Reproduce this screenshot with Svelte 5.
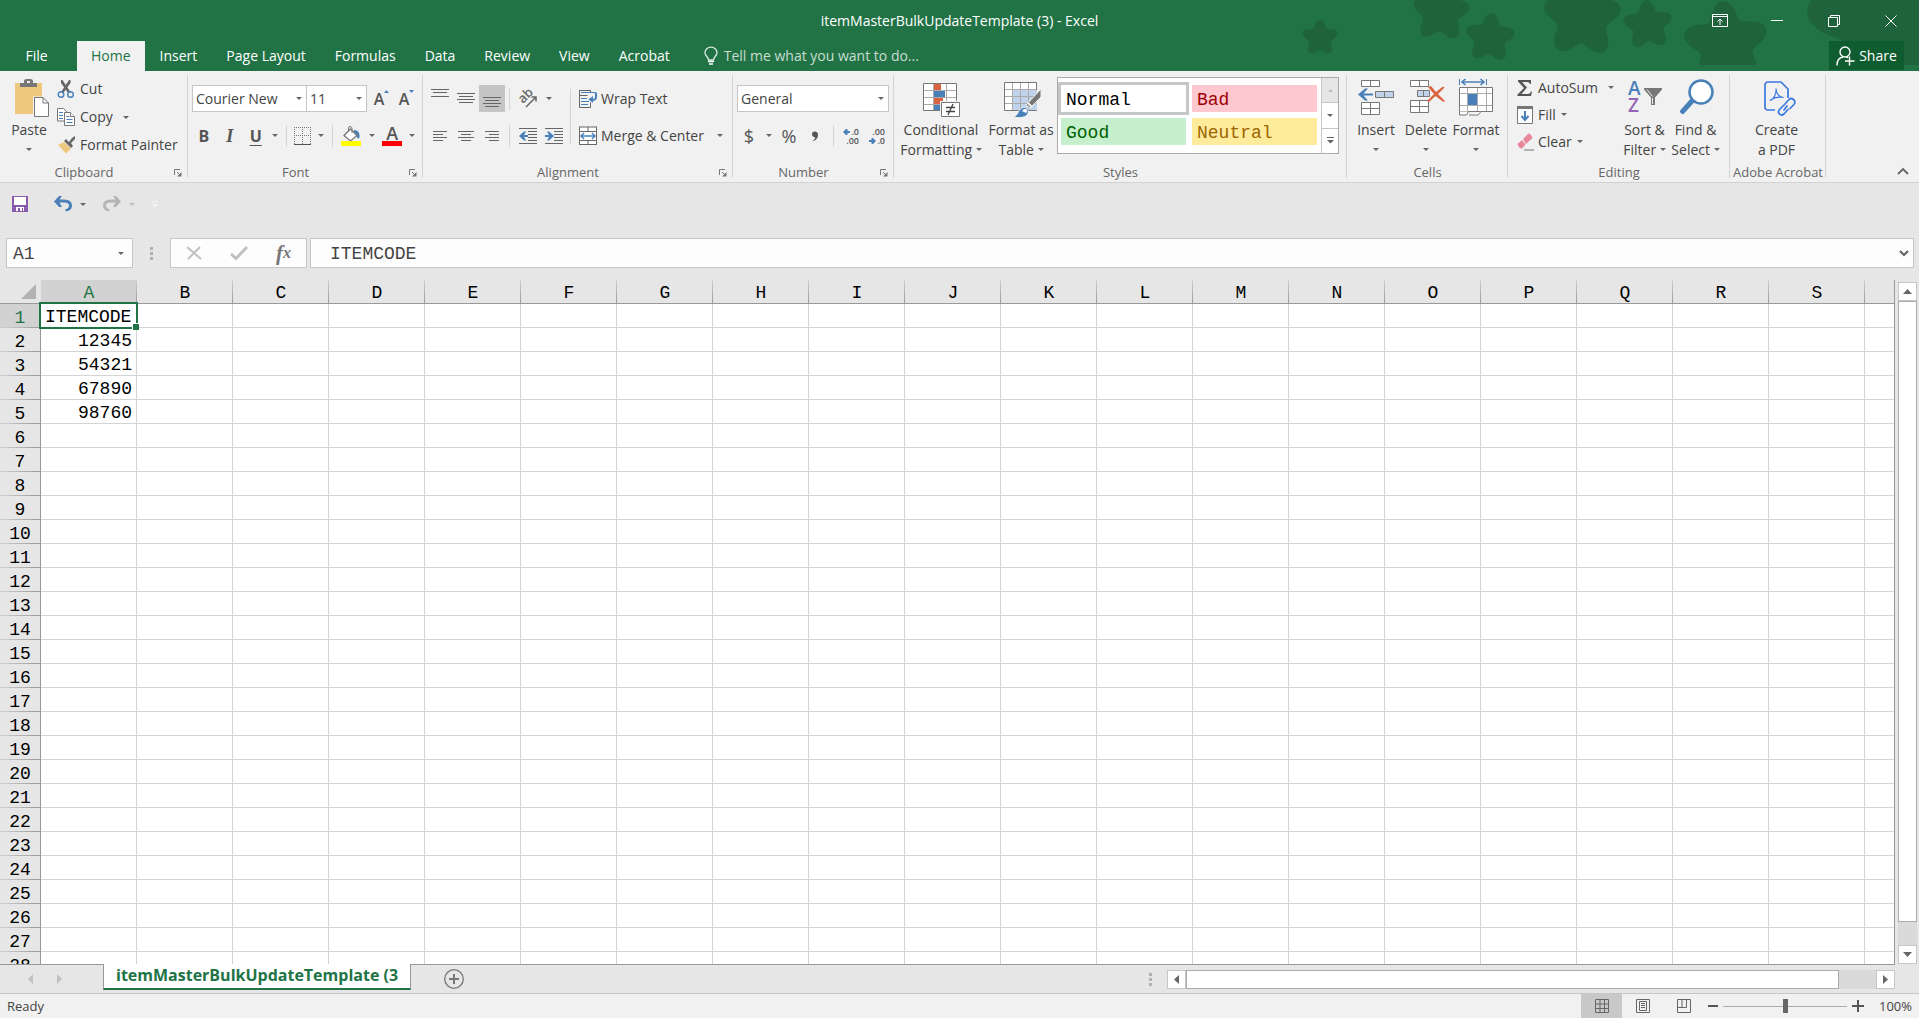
<script lang="ts">
  const tabs = ['Insert', 'Page Layout', 'Formulas', 'Data', 'Review', 'View', 'Acrobat'];
  const columns = 'ABCDEFGHIJKLMNOPQRS'.split('');
  const rows = Array.from({ length: 28 }, (_, i) => i + 1);
  const values: Record<number, string> = { 1: 'ITEMCODE', 2: '12345', 3: '54321', 4: '67890', 5: '98760' };

  let nameBox = $state('A1');
  let formula = $state('ITEMCODE');
  let font = $state('Courier New');
  let fontSize = $state('11');
  let numberFormat = $state('General');
  let zoom = $state(50);

  // Title bar decoration: x, y, radius, rotation in degrees
  const stars = [
    [41, 38, 18, 0],
    [162, 13, 29, 4],
    [211, 38, 25, 4],
    [303, 18, 40, 2],
    [369, 25, 25, -4],
    [447, 44, 43, -4],
    [616, 12, 88, -18]
  ];

  // Soft five-armed star: a circle whose radius swells five times per turn
  function starPath([cx, cy, r, turn]: number[]) {
    const pts = Array.from({ length: 90 }, (_, i) => {
      const t = (i * 4 * Math.PI) / 180;
      const a = t + ((turn - 90) * Math.PI) / 180;
      const d = r * (0.82 + 0.18 * Math.cos(5 * t));
      return `${(cx + Math.cos(a) * d).toFixed(1)} ${(cy + Math.sin(a) * d).toFixed(1)}`;
    });
    return `M${pts.join('L')}z`;
  }
</script>

{#snippet caret()}
  <svg class="caret" width="6" height="3" viewBox="0 0 6 3"><path d="M0 0h6L3 3z" fill="currentColor" /></svg>
{/snippet}

{#snippet launcher(label: string)}
  <button class="launcher" aria-label={label}>
    <svg width="8" height="8" viewBox="0 0 8 8"><path d="M.5 6V.5H6M3 3l3 3" fill="none" stroke="#777" /><path d="M7.500 3v4.500H3z" fill="#777" /></svg>
  </button>
{/snippet}

{#snippet lines(list: number[][])}
  <svg width="18" height="20" viewBox="0 0 18 20" stroke="#666" shape-rendering="crispEdges">
    {#each list as [x1, x2, y]}
      <path d="M{x1} {y + 0.5}H{x2}" />
    {/each}
  </svg>
{/snippet}

<div class="app">
  <header class="top">
    <svg class="stars" width="640" height="65" viewBox="0 0 640 65">
      {#each stars as star}
        <path d={starPath(star)} />
      {/each}
    </svg>
    <div class="title-bar">
      <span></span>
      <h1>itemMasterBulkUpdateTemplate (3) - Excel</h1>
      <div class="window-buttons">
        <button aria-label="Ribbon display options">
          <svg width="16" height="14" viewBox="0 0 16 14" fill="none" stroke="#fff"><path d="M.5 .5h15v12H.5zM.5 2.500h15M8 11V5M5.500 7.500L8 5l2.500 2.500" /></svg>
        </button>
        <button aria-label="Minimize">
          <svg width="12" height="12" viewBox="0 0 12 12" stroke="#fff"><path d="M0 5.500h12" /></svg>
        </button>
        <button aria-label="Restore">
          <svg width="12" height="12" viewBox="0 0 12 12" fill="none" stroke="#fff"><path d="M.5 2.500h9v9h-9zM2.500 2.500v-2h9v9h-2" /></svg>
        </button>
        <button aria-label="Close">
          <svg width="12" height="12" viewBox="0 0 12 12" fill="none" stroke="#fff"><path d="M.5 .5l11 11M11.500 .5l-11 11" /></svg>
        </button>
      </div>
    </div>
    <nav class="tabs">
      <button class="file">File</button>
      <button class="active">Home</button>
      {#each tabs as tab}
        <button>{tab}</button>
      {/each}
      <button class="tell">
        <svg width="14" height="18" viewBox="0 0 14 18" fill="none" stroke="#dcebe2"><path d="M4.500 13c0-3-3.500-4-3.500-7.300a6 5.500 0 0 1 12 0C13 9 9.500 10 9.500 13z" stroke-width="1.300" /><path d="M4 14.500h6M5 17h4" stroke-width="1.500" stroke="#fff" /></svg>
        Tell me what you want to do...
      </button>
      <button class="share">
        <svg width="19" height="20" viewBox="0 0 19 20" fill="none" stroke="#fff" stroke-width="1.400"><circle cx="9" cy="6" r="5" /><path d="M1 19.500c0-5 2.500-8 6-8.500M10.500 11l1.500 1M13.500 10.500v9M9 15h9.500" /></svg>
        Share
      </button>
    </nav>
  </header>

  <section class="ribbon">
    <div class="group clipboard">
      <div class="body">
        <button class="big">
          <span class="pic">
            <svg width="36" height="40" viewBox="0 0 36 40">
              <path d="M1 3h27v31H1z" fill="#edc87e" />
              <path d="M6 3h4V1q0-2 3-2h3q3 0 3 2v2h4v4H6z" fill="#777" />
              <path d="M13 1h3v2h-3z" fill="#f1f1f1" />
              <path d="M19 16.500h10.500l6 6V38H19z" fill="#f1f1f1" />
              <path d="M20.500 17.500h8.500l5.500 5.500v13.500h-14z" fill="#fff" stroke="#777" />
              <path d="M29 17.500V23h5.500" fill="none" stroke="#777" />
            </svg>
          </span>
          <span>Paste</span>
          <span class="drop">{@render caret()}</span>
        </button>
        <div class="stack">
          <button>
            <svg width="18" height="20" viewBox="0 0 18 20"><path d="M4 1l1.500 0 8 12-2 1.500L4 4zM13.500 1l0 3-7.500 10.500L4 13l8-12z" fill="#666" /><circle cx="4" cy="15.500" r="2.800" fill="none" stroke="#4a80ba" stroke-width="1.400" /><circle cx="13.500" cy="15.500" r="2.800" fill="none" stroke="#4a80ba" stroke-width="1.400" /></svg>
            Cut
          </button>
          <button>
            <svg width="18" height="20" viewBox="0 0 18 20" fill="#fff" stroke="#777"><path d="M.5 1.500h6l4 4v8.500h-10z" /><path d="M2 5.500h4M2 8.500h4M2 11.500h4" stroke="#4a80ba" /><path d="M7.500 5.500h6l4 4v9h-10z" /><path d="M13.500 5.500v4h4" /><path d="M9.500 9.500h3M9.500 12.500h6M9.500 15.500h6" stroke="#4a80ba" /></svg>
            Copy <span class="far">{@render caret()}</span>
          </button>
          <button>
            <svg width="18" height="20" viewBox="0 0 18 20"><path d="M1 10l6-3 7 7-5 4.500z" fill="#edc87e" /><path d="M7 6l2-2 3 3 3-4 3-2v3l-4 4 2 3-2 2z" fill="#666" /></svg>
            Format Painter
          </button>
        </div>
      </div>
      <footer>Clipboard {@render launcher('Clipboard settings')}</footer>
    </div>

    <div class="group font">
      <div class="body two-rows">
        <div class="row">
          <label class="pick family"><select aria-label="Font" bind:value={font}><option>Courier New</option></select>{@render caret()}</label>
          <label class="pick size"><select aria-label="Font size" bind:value={fontSize}><option>11</option></select>{@render caret()}</label>
          <button class="tool grow" aria-label="Increase font size">A<svg width="5" height="3" viewBox="0 0 5 3"><path d="M0 3h5L2.500 0z" fill="#4a80ba" /></svg></button>
          <button class="tool grow" aria-label="Decrease font size">A<svg width="5" height="3" viewBox="0 0 5 3"><path d="M0 0h5L2.500 3z" fill="#4a80ba" /></svg></button>
        </div>
        <div class="row">
          <button class="tool"><b>B</b></button>
          <button class="tool wide"><i>I</i></button>
          <button class="tool"><u>U</u></button>
          <button class="arrow" aria-label="Underline styles">{@render caret()}</button>
          <hr />
          <button class="tool" aria-label="Borders">
            <svg width="17" height="18" viewBox="0 0 17 18" stroke="#777" fill="none" shape-rendering="crispEdges"><path d="M0 .5h17M.5 0v17M16.500 0v17M8.500 0v17M0 8.500h17" stroke-dasharray="1 1" /><path d="M0 17h17" stroke="#555" /></svg>
          </button>
          <button class="arrow" aria-label="Border styles">{@render caret()}</button>
          <hr />
          <button class="tool wide" aria-label="Fill colour">
            <svg width="20" height="20" viewBox="0 0 20 20"><path d="M13 4c4 0 6 3 5.500 7-.5 2-2 2-2.500 0L13 7z" fill="#4a80ba" /><path d="M9.500 3l6.500 6.500L9.500 15 3 9.500z" fill="#fff" stroke="#777" stroke-width="1.300" /><path d="M7.500 6V2q0-1.500 1.500-1.500t2 1.500v5" fill="none" stroke="#777" /><path d="M0 15h20v5H0z" fill="#ff0" /></svg>
          </button>
          <button class="arrow" aria-label="Fill colours">{@render caret()}</button>
          <button class="tool wide font-color" aria-label="Font colour">A</button>
          <button class="arrow" aria-label="Font colours">{@render caret()}</button>
        </div>
      </div>
      <footer>Font {@render launcher('Font settings')}</footer>
    </div>

    <div class="group alignment">
      <div class="body">
        <div class="two-rows">
          <div class="row">
            <button class="tool mid" aria-label="Top align">{@render lines([[0, 18, 0], [2, 16, 3], [0, 18, 7]])}</button>
            <button class="tool mid" aria-label="Middle align">{@render lines([[0, 18, 4], [2, 16, 7], [0, 18, 10], [2, 16, 13]])}</button>
            <button class="tool mid pressed" aria-label="Bottom align">{@render lines([[0, 18, 8], [2, 16, 11], [0, 18, 14], [2, 16, 17]])}</button>
            <hr />
            <button class="tool wide" aria-label="Orientation">
              <svg width="20" height="20" viewBox="0 0 20 20"><text x="0" y="0" transform="translate(5 15) rotate(-45)" font-size="13" font-weight="600" fill="#666">ab</text><path d="M8 18L18 8M13.500 8H18v4.500" fill="none" stroke="#666" stroke-width="1.500" /></svg>
            </button>
            <button class="arrow" aria-label="Orientation styles">{@render caret()}</button>
          </div>
          <div class="row">
            <button class="tool mid" aria-label="Align left">{@render lines([[2, 16, 5], [2, 12, 8], [2, 16, 11], [2, 12, 14]])}</button>
            <button class="tool mid" aria-label="Center">{@render lines([[1, 17, 5], [4, 14, 8], [1, 17, 11], [4, 14, 14]])}</button>
            <button class="tool mid" aria-label="Align right">{@render lines([[2, 16, 5], [6, 16, 8], [2, 16, 11], [6, 16, 14]])}</button>
            <hr />
            <button class="tool wide" aria-label="Decrease indent">
              <svg width="18" height="18" viewBox="0 0 18 18"><path d="M0 1.500h18M9 4.500h9M9 7.500h9M9 10.500h9M9 13.500h9M0 16.500h18" stroke="#666" /><path d="M0 9l5-4.500h2L5 8h4v2H5l2 3.500H5z" fill="#4a80ba" /></svg>
            </button>
            <button class="tool" aria-label="Increase indent">
              <svg width="18" height="18" viewBox="0 0 18 18"><path d="M0 1.500h18M9 4.500h9M9 7.500h9M9 10.500h9M9 13.500h9M0 16.500h18" stroke="#666" /><path d="M9 9L4 4.500H2L4 8H0v2h4l-2 3.500h2z" fill="#4a80ba" /></svg>
            </button>
          </div>
        </div>
        <hr class="tall" />
        <div class="two-rows labelled">
          <button>
            <svg width="20" height="20" viewBox="0 0 20 20"><path d="M12.500 4V1.500h-11v17h11v-5M1.500 6.500h8M1.500 1.500v4" fill="none" stroke="#666" /><path d="M3 3.500h15v5M3 12.500h8M3 15.500h7M3 9.500h6" fill="none" stroke="#4a80ba" /><path d="M18 4v4q0 3-4 3" fill="none" stroke="#4a80ba" stroke-width="2" /><path d="M10.500 10.500L15 7v7z" fill="#4a80ba" /></svg>
            Wrap Text
          </button>
          <button>
            <svg width="20" height="20" viewBox="0 0 20 20"><path d="M1 1h18v18H1z" fill="#fff" /><path d="M1.500 1v18M18.500 1v18M1 1h18M1 5.500h18M1 14.500h18M1 18.500h18M10 1v4M10 15v4" fill="none" stroke="#666" /><path d="M3 10h14M6 7L3 10l3 3M14 7l3 3-3 3" fill="none" stroke="#4a80ba" stroke-width="1.500" /></svg>
            Merge &amp; Center <span class="far">{@render caret()}</span>
          </button>
        </div>
      </div>
      <footer>Alignment {@render launcher('Alignment settings')}</footer>
    </div>

    <div class="group number">
      <div class="body two-rows">
        <div class="row">
          <label class="pick general"><select aria-label="Number format" bind:value={numberFormat}><option>General</option></select>{@render caret()}</label>
        </div>
        <div class="row signs">
          <button class="tool sign">$</button>
          <button class="arrow" aria-label="Currencies">{@render caret()}</button>
          <button class="tool sign">%</button>
          <button class="tool comma" aria-label="Comma style">
            <svg width="6" height="10" viewBox="0 0 6 10"><path d="M1 9.500Q3.500 8 3 6 0 6 0 3.200 0 .5 2.800.5 6 .5 6 4q0 4-4.500 6z" fill="#555" /></svg>
          </button>
          <hr />
          <button class="tool decimal" aria-label="Increase decimal">
            <svg width="16" height="18" viewBox="0 0 16 18"><path d="M0 5l3-3h1.500v2H7v2H4.500v2H3z" fill="#4a80ba" /><g font-size="9" font-weight="600" fill="#555" text-anchor="end"><text x="16" y="8">.0</text><text x="16" y="17">.00</text></g></svg>
          </button>
          <button class="tool decimal" aria-label="Decrease decimal">
            <svg width="16" height="18" viewBox="0 0 16 18"><path d="M7 14l-3-3H2.500v2H0v2h2.500v2H4z" fill="#4a80ba" /><g font-size="9" font-weight="600" fill="#555" text-anchor="end"><text x="16" y="8">.00</text><text x="16" y="17">.0</text></g></svg>
          </button>
        </div>
      </div>
      <footer>Number {@render launcher('Number settings')}</footer>
    </div>

    <div class="group styles">
      <div class="body">
        <button class="big">
          <span class="pic">
            <svg width="36" height="40" viewBox="0 0 36 40">
              <path d="M.5 3.500h33v27h-33z" fill="#fff" stroke="#777" />
              <path d="M10.500 4v26M23.500 4v26M1 10.500h32M1 17.500h32M1 24.500h32" stroke="#aaa" />
              <path d="M11 4h7v6h-7zM11 18h9v6h-9z" fill="#d9643f" /><path d="M11 11h11v6H11zM11 25h6v5h-6z" fill="#4a80ba" />
              <path d="M17 21h20v17H17z" fill="#f1f1f1" /><path d="M18.500 22.500h18v14h-18z" fill="#fff" stroke="#777" />
              <path d="M23 27.500h9M23 31.500h9M30 24l-5 11" stroke="#444" stroke-width="1.300" />
            </svg>
          </span>
          <span>Conditional</span><span>Formatting {@render caret()}</span>
        </button>
        <button class="big">
          <span class="pic">
            <svg width="34" height="40" viewBox="0 0 34 40">
              <path d="M.5 2.500h32v28h-32z" fill="#fff" stroke="#777" />
              <path d="M9 10h24v20H9z" fill="#c0d3ea" />
              <path d="M8.500 3v27M16.500 3v27M24.500 3v27M1 9.500h31M1 16.500h31M1 23.500h31" stroke="#aaa" />
              <path d="M37 9v8L26 28l-4-3z" fill="#777" stroke="#f1f1f1" />
              <path d="M24 23l4 4" stroke="#f1f1f1" stroke-width="2" />
              <path d="M9 37c6-1 4-8 11-10 5 1 5 6 3 8-3 3-9 3-14 2z" fill="#4a80ba" stroke="#f1f1f1" />
              <path d="M18 31q2-3 4-2 2 2 0 4z" fill="#fff" />
            </svg>
          </span>
          <span>Format as</span><span>Table {@render caret()}</span>
        </button>
        <div class="gallery">
          <div class="swatches">
            <button class="normal">Normal</button>
            <button class="bad">Bad</button>
            <button class="good">Good</button>
            <button class="neutral">Neutral</button>
          </div>
          <div class="gallery-scroll">
            <button disabled aria-label="Previous styles"><svg width="5" height="3" viewBox="0 0 5 3"><path d="M0 3h5L2.500 0z" fill="#bbb" /></svg></button>
            <button aria-label="Next styles">{@render caret()}</button>
            <button aria-label="More styles"><svg width="7" height="7" viewBox="0 0 7 7"><path d="M0 0h7v1H0zM0 3h7L3.500 6.500z" fill="#666" /></svg></button>
          </div>
        </div>
      </div>
      <footer>Styles</footer>
    </div>

    <div class="group cells">
      <div class="body">
        <button class="big">
          <span class="pic">
            <svg width="36" height="40" viewBox="0 0 36 40" fill="#fff" stroke="#777">
              <path d="M3.500 .5h18v6h-18zM12.500 .5v6M3.500 22.500h18v12h-18zM12.500 22.500v12M3.500 28.500h18" /><path d="M17.500 11.500h18v6h-18zM26.500 11.500v6" fill="#c0d3ea" /><path d="M0 14.500l7-6h3l-4.500 5H15v2H5.500l4.500 5H7z" fill="#4a80ba" stroke="none" />
            </svg>
          </span>
          <span>Insert</span><span class="drop">{@render caret()}</span>
        </button>
        <button class="big">
          <span class="pic">
            <svg width="36" height="40" viewBox="0 0 36 40" fill="#fff" stroke="#777">
              <path d="M2.500 .5h18v6h-18zM11.500 .5v6M2.500 20.500h18v12h-18zM11.500 20.500v12M2.500 26.500h18" /><path d="M9.500 10.500h12v6h-12zM15.500 10.500v6" fill="#c0d3ea" /><path d="M20 7l3-1 5 6 7-5.500 1.500 1L30 14l7 7-1.500 1-8-6-6.500 6-2-1 7-7z" fill="#d9643f" stroke="none" />
            </svg>
          </span>
          <span>Delete</span><span class="drop">{@render caret()}</span>
        </button>
        <button class="big">
          <span class="pic">
            <svg width="36" height="40" viewBox="0 0 36 40" fill="none" stroke="#777">
              <path d="M1.500 7.500h33v24h-33z" fill="#fff" /><path d="M9.500 8v23M19.500 8v23M28.500 8v23M2 13.500h32M2 25.500h32" stroke="#aaa" /><path d="M10 14h9v11h-9z" fill="#4a80ba" stroke="none" /><path d="M1.500 31.500v3.500h7l2-3.500M11 35h9l3-3.500" fill="#fff" /><path d="M1.500 -1v6M28.500 -1v6" stroke="#4a80ba" /><path d="M5 2h20M7.500 -1L4 2l3.500 3M22.500 -1L26 2l-3.500 3" stroke="#4a80ba" stroke-width="1.600" />
            </svg>
          </span>
          <span>Format</span><span class="drop">{@render caret()}</span>
        </button>
      </div>
      <footer>Cells</footer>
    </div>

    <div class="group editing">
      <div class="body">
        <div class="stack">
          <button>
            <svg width="16" height="18" viewBox="0 0 16 18"><path d="M1 1h13v4h-1q-.5-2-3-2H5l5 5.500L4.500 15H11q2 0 3-2.500h1L14 17H.5v-1.500L7 9 1 2.500z" fill="#555" /></svg>
            AutoSum <span class="far">{@render caret()}</span>
          </button>
          <button>
            <svg width="16" height="18" viewBox="0 0 16 18"><path d="M.5 1.500h15v16H.5z" fill="#fff" stroke="#777" /><path d="M0 0h16v3H0z" fill="#777" /><path d="M8 5v9M4.500 10L8 14l3.500-4" fill="none" stroke="#4a80ba" stroke-width="2" /></svg>
            Fill {@render caret()}
          </button>
          <button>
            <svg width="16" height="18" viewBox="0 0 16 18"><path d="M6 6L11.500 .5q2.500 0 4 4.500L9 11z" fill="#e8879a" /><path d="M5 7l3.500 4.500L5 15.500q-3 0-4.500-4.500z" fill="#e8879a" /><path d="M7 17h10" stroke="#777" /></svg>
            Clear {@render caret()}
          </button>
        </div>
        <button class="big">
          <span class="pic">
            <svg width="36" height="40" viewBox="0 0 36 40"><g font-size="19" font-weight="600"><text x="1" y="15" fill="#4a80ba">A</text><text x="1" y="32" fill="#9463b5">Z</text></g><path d="M17 8h18v1.500l-7 8V25h-4v-7.500l-7-8z" fill="#777" /><path d="M25.500 18v6M20 9.500l5.500 7" stroke="#eee" /></svg>
          </span>
          <span>Sort &amp;</span><span>Filter {@render caret()}</span>
        </button>
        <button class="big">
          <span class="pic">
            <svg width="36" height="40" viewBox="0 0 36 40"><path d="M14 21L4.500 31.500" stroke="#4a80ba" stroke-width="5" stroke-linecap="round" /><circle cx="23" cy="12" r="11.500" fill="#fff" stroke="#4a80ba" stroke-width="2.500" /></svg>
          </span>
          <span>Find &amp;</span><span>Select {@render caret()}</span>
        </button>
      </div>
      <footer>Editing</footer>
    </div>

    <div class="group acrobat">
      <div class="body">
        <button class="big">
          <span class="pic">
            <svg width="26" height="40" viewBox="0 0 26 40" fill="none" stroke="#3b78e0" stroke-width="1.700">
              <path d="M11 30H4q-3 0-3-3V5q0-3 3-3h13l7 7v9" /><path d="M6 20.500c4-1 6.500-7 6-12 0 5 3.500 9 7.500 9-5-1-9.500 0-13.500 3z" stroke-width="1.200" /><path d="M21 24l4-4.500q2-2 4.500 0t.5 5L26 28.500M23 26l-3 4M20 25l-4.500 4.500q-2 2.500 0 4.500t4.500 0l4-4.500" stroke-linecap="round" />
            </svg>
          </span>
          <span>Create</span><span>a PDF</span>
        </button>
      </div>
      <footer>Adobe Acrobat</footer>
    </div>

    <button class="collapse" aria-label="Collapse the ribbon">
      <svg width="12" height="8" viewBox="0 0 12 8"><path d="M1 7l5-5 5 5" fill="none" stroke="#666" stroke-width="1.800" /></svg>
    </button>
  </section>

  <div class="quick-access">
    <button aria-label="Save">
      <svg width="16" height="16" viewBox="0 0 16 16"><path d="M0 0h16v16H0z" fill="#8a5aad" /><path d="M2 1h12v8H2z" fill="#fff" /><path d="M4 11h8v4H4z" fill="#fff" /><path d="M6 12h2v3H6zM10 12h1v3h-1z" fill="#8a5aad" /></svg>
    </button>
    <button class="undo" aria-label="Undo">
      <svg width="18" height="16" viewBox="0 0 18 16"><path d="M0 5.500L5 0h3L5.500 3.500H10q8 0 8 6 0 5-6 6l-1-2q4-1 4-4t-5-3H5.500L8 11H5z" fill="#4a80ba" /></svg>
      {@render caret()}
    </button>
    <button class="redo" aria-label="Redo" disabled>
      <svg width="18" height="16" viewBox="0 0 18 16"><path d="M18 5.500L13 0h-3l2.500 3.500H8q-8 0-8 6 0 5 6 6l1-2q-4-1-4-4t5-3h4.500L10 11h3z" fill="#b5b5b5" /></svg>
      {@render caret()}
    </button>
    <button aria-label="Customize toolbar"><svg width="6" height="6" viewBox="0 0 6 6"><path d="M0 0h6v1H0zM0 3h6L3 6z" fill="#f6f6f6" /></svg></button>
  </div>

  <div class="formula-bar">
    <label class="name-box"><input aria-label="Name box" bind:value={nameBox} />{@render caret()}</label>
    <span class="dots"></span>
    <div class="entry">
      <button aria-label="Cancel"><svg width="16" height="14" viewBox="0 0 16 14"><path d="M1 1l14 12M14 1L2 13" stroke="#c0c0c0" stroke-width="2" /></svg></button>
      <button aria-label="Enter"><svg width="18" height="14" viewBox="0 0 18 14"><path d="M1 8l5 4.500L17 1" fill="none" stroke="#c0c0c0" stroke-width="3" /></svg></button>
      <button class="fx" aria-label="Insert function"><i>f</i><i class="x">x</i></button>
    </div>
    <label class="formula"><input aria-label="Formula" bind:value={formula} />
      <svg width="10" height="7" viewBox="0 0 10 7"><path d="M1 1l4 4 4-4" fill="none" stroke="#666" stroke-width="2.200" /></svg>
    </label>
  </div>

  <main class="sheet">
    <div class="grid">
      <table>
        <colgroup>
          <col class="col-head" />
          {#each columns as column (column)}<col class="col-data" />{/each}
          <col />
        </colgroup>
        <thead>
          <tr>
            <th class="corner" aria-label="Select all"><svg width="15" height="15" viewBox="0 0 15 15"><path d="M15 0v15H0z" fill="#b2b2b2" /></svg></th>
            {#each columns as column (column)}<th class:current={column === 'A'}>{column}</th>{/each}
            <th></th>
          </tr>
        </thead>
        <tbody>
          {#each rows as row (row)}
            <tr>
              <th class:current={row === 1}>{row}</th>
              {#each columns as column (column)}
                {@const value = column === 'A' ? values[row] : undefined}
                <td class:figure={value !== undefined && row > 1}>{value ?? ''}{#if column === 'A' && row === 1}<span class="selection"></span>{/if}</td>
              {/each}
              <td></td>
            </tr>
          {/each}
        </tbody>
      </table>
    </div>
    <div class="v-scroll">
      <button aria-label="Scroll up"><svg width="9" height="5" viewBox="0 0 9 5"><path d="M0 5h9L4.500 0z" fill="#666" /></svg></button>
      <div class="track"><div class="thumb"></div></div>
      <button aria-label="Scroll down"><svg width="9" height="5" viewBox="0 0 9 5"><path d="M0 0h9L4.500 5z" fill="#666" /></svg></button>
    </div>
  </main>

  <div class="sheet-bar">
    <div class="sheet-nav">
      <button aria-label="Previous sheet"><svg width="5" height="10" viewBox="0 0 5 10"><path d="M5 0v10L0 5z" fill="#c0c0c0" /></svg></button>
      <button aria-label="Next sheet"><svg width="5" height="10" viewBox="0 0 5 10"><path d="M0 0v10l5-5z" fill="#c0c0c0" /></svg></button>
    </div>
    <button class="sheet-tab">itemMasterBulkUpdateTemplate (3</button>
    <button class="add" aria-label="New sheet">
      <svg width="20" height="20" viewBox="0 0 20 20" fill="none" stroke="#777"><circle cx="10" cy="10" r="9.300" stroke-width="1.300" /><path d="M10 5v10M5 10h10" stroke-width="2" /></svg>
    </button>
    <span class="dots"></span>
    <div class="h-scroll">
      <button aria-label="Scroll left"><svg width="5" height="9" viewBox="0 0 5 9"><path d="M5 0v9L0 4.500z" fill="#666" /></svg></button>
      <div class="track"><div class="thumb"></div></div>
      <button aria-label="Scroll right"><svg width="5" height="9" viewBox="0 0 5 9"><path d="M0 0v9l5-4.500z" fill="#666" /></svg></button>
    </div>
  </div>

  <footer class="status">
    <span class="ready">Ready</span>
    <button class="view on" aria-label="Normal view"><svg width="14" height="14" viewBox="0 0 14 14" fill="none" stroke="#666"><path d="M.5 .5h13v13H.5zM5 .5v13M9.500 .5v13M.5 5h13M.5 9.500h13" /></svg></button>
    <button class="view" aria-label="Page layout view"><svg width="14" height="14" viewBox="0 0 14 14" fill="none" stroke="#666"><path d="M.5 .5h13v13H.5zM3.500 2.500h7v9h-7zM5 4.500h4M5 6.500h4M5 8.500h4" /></svg></button>
    <button class="view" aria-label="Page break view"><svg width="14" height="14" viewBox="0 0 14 14" fill="none" stroke="#666"><path d="M.5 .5h13v13H.5zM.5 8.500h9V.5M5 .5v8" /></svg></button>
    <button class="step" aria-label="Zoom out"><svg width="10" height="10" viewBox="0 0 10 10"><path d="M0 5h10" stroke="#555" stroke-width="2" /></svg></button>
    <input type="range" min="0" max="100" aria-label="Zoom" bind:value={zoom} />
    <button class="step" aria-label="Zoom in"><svg width="12" height="12" viewBox="0 0 12 12"><path d="M0 6h12M6 0v12" stroke="#555" stroke-width="2" /></svg></button>
    <span class="percent">100%</span>
  </footer>
</div>

<style>
  :global(body) { margin: 0; }
  .app { display: flex; flex-direction: column; height: 100vh; overflow: hidden; background: #e6e6e6; color: #444; font: 14px/20px "Open Sans", "Noto Sans", sans-serif; }
  .app * { box-sizing: border-box; }
  button { margin: 0; padding: 0; border: 0; background: none; color: inherit; font: inherit; white-space: nowrap; }
  svg { display: block; flex: none; overflow: visible; }
  .caret { display: inline-block; vertical-align: 4px; color: #666; }

  /* title bar and tabs */
  .top { position: relative; background: #217346; color: #fff; }
  .stars { position: absolute; top: 0; right: 0; overflow: hidden; fill: #1e633c; }
  .title-bar { position: relative; display: grid; grid-template-columns: 1fr auto 1fr; align-items: center; height: 41px; }
  h1 { margin: 0; font-size: 14px; font-weight: 400; }
  .window-buttons { display: flex; justify-content: flex-end; height: 38px; }
  .window-buttons button { display: grid; place-items: center; width: 57px; }
  .tabs { position: relative; display: flex; gap: 1px; height: 30px; }
  .tabs button { padding: 0 14px; }
  .tabs .file { width: 73px; margin-right: 3px; }
  .tabs .active { background: #f1f1f1; color: #217346; }
  .tabs .tell { display: flex; align-items: center; gap: 6px; margin-left: 5px; color: #c8ddd0; }
  .tabs .share { display: flex; align-items: center; justify-content: center; gap: 4px; width: 75px; margin: 0 15px 1px auto; padding: 0; background: #0e5c2f; }

  /* ribbon */
  .ribbon { display: flex; height: 112px; padding-top: 4px; border-bottom: 1px solid #d2d2d2; background: #f1f1f1; }
  .group { display: flex; flex-direction: column; flex: none; background: linear-gradient(#d4d4d4, #d4d4d4) top right / 1px 103px no-repeat; }
  .group .body { display: flex; height: 88px; }
  .group footer { position: relative; height: 18px; font-size: 13px; line-height: 18px; text-align: center; color: #666; white-space: nowrap; }
  .launcher { position: absolute; right: 6px; top: 6px; }
  .clipboard { width: 188px; }
  .font { width: 235px; }
  .alignment { width: 310px; }
  .number { width: 161px; }
  .styles { width: 453px; }
  .cells { width: 161px; }
  .editing { width: 222px; }
  .acrobat { width: 96px; }
  .clipboard footer, .font footer, .alignment footer, .number footer { padding-right: 20px; }

  .big { display: flex; flex-direction: column; align-items: center; padding-top: 5px; }
  .big .pic { display: flex; height: 40px; }
  .big .drop { line-height: 20px; }
  .clipboard .big { width: 46px; margin-left: 6px; }
  .clipboard .pic { padding-left: 6px; }
  .stack button { display: flex; align-items: center; gap: 5px; height: 28px; }
  .clipboard .stack { padding-left: 5px; }
  .far { display: flex; margin-left: 5px; }

  .two-rows { display: flex; flex-direction: column; gap: 10px; padding: 10px 4px 0; }
  .group .two-rows { flex-direction: column; }
  .row { display: flex; align-items: center; height: 27px; }
  .tool { display: grid; place-items: center; width: 24px; height: 27px; font-size: 16px; color: #555; }
  .tool.mid { width: 26px; }
  .tool.wide { width: 28px; }
  .tool.pressed { background: #c5c5c5; }
  .tool i { font-family: "Liberation Serif", serif; font-size: 18px; font-weight: 700; }
  .tool u { font-weight: 700; text-underline-offset: 3px; text-decoration-thickness: 1px; }
  .tool.grow { display: flex; align-items: center; justify-content: center; width: 25px; font-weight: 600; }
  .tool.grow svg { align-self: flex-start; margin-top: 5px; }
  .font .grow:first-of-type { margin-left: 2px; }
  .font-color { height: 20px; border: solid #f00; border-width: 0 0 5px; font-size: 18px; line-height: 14px; font-weight: 600; }
  .font-color.wide { width: 20px; margin: 0 3px; }
  .arrow { display: grid; place-items: center; width: 14px; height: 27px; }
  hr { width: 1px; height: 22px; margin: 0 4px; border: 0; background: #d4d4d4; }
  hr.tall { height: 55px; margin: 14px 3px 0 0; }
  .labelled button { display: flex; align-items: center; gap: 3px; height: 27px; }
  .labelled .far { margin-left: 10px; }

  .pick { position: relative; display: flex; height: 27px; }
  .pick select { width: 100%; padding: 0 0 0 3px; border: 1px solid #c6c6c6; border-radius: 0; background: #fff; color: #444; font: inherit; appearance: none; }
  .pick .caret { position: absolute; right: 5px; top: 12px; }
  .family { width: 115px; margin-right: -1px; }
  .size { width: 61px; }
  .general { width: 152px; }
  .signs .sign { font-size: 18px; }
  .signs .arrow { width: 16px; }
  .signs .comma { width: 28px; }
  .signs .decimal { width: 26px; }

  .styles .body { padding-left: 2px; }
  .styles .big { width: 90px; }
  .styles .big + .big { width: 70px; }
  .gallery { display: flex; width: 282px; height: 77px; margin: 2px 8px 0 auto; border: 1px solid #ababab; background: #fff; font: 18px/24px "Courier New", "Liberation Mono", monospace; }
  .swatches { display: grid; grid-template-columns: 125px 125px; gap: 6px; align-content: start; flex: 1; padding: 7px 3px; }
  .swatches button { height: 27px; padding: 3px 0 0 5px; text-align: left; }
  .normal { outline: 3px solid #c6c6c6; color: #000; }
  .bad { background: #ffc7ce; color: #9c0006; }
  .good { background: #c6efce; color: #006100; }
  .neutral { background: #ffeb9c; color: #9c6500; }
  .gallery-scroll { display: flex; flex-direction: column; width: 17px; border-left: 1px solid #c6c6c6; }
  .gallery-scroll button { display: grid; place-items: center; flex: 1; }
  .gallery-scroll button + button { border-top: 1px solid #c6c6c6; }
  .gallery-scroll button:disabled { background: #e6e6e6; }

  .cells .body { padding-left: 4px; }
  .cells .big { width: 50px; }
  .editing .body { padding-left: 9px; }
  .editing .stack { width: 102px; margin-top: -1px; }
  .editing .stack button { height: 27px; }
  .editing .big { width: 51px; }
  .acrobat .big { width: 93px; }
  .collapse { align-self: flex-end; margin: 0 10px 7px auto; }

  /* quick access and formula bar */
  .quick-access { display: flex; align-items: center; gap: 17px; height: 55px; padding: 0 12px 13px; }
  .quick-access button { display: flex; align-items: center; gap: 8px; }
  .redo .caret { color: #c0c0c0; }
  .quick-access .undo { margin-left: 9px; }
  .formula-bar { display: flex; height: 30px; margin: 0 5px 12px 6px; }
  .formula-bar label, .entry { position: relative; display: flex; align-items: center; border: 1px solid #c6c6c6; background: #fdfdfd; }
  .formula-bar input { width: 100%; height: 28px; padding: 2px 6px 0; border: 0; background: none; color: #444; font: 18px "Courier New", "Liberation Mono", monospace; }
  .name-box { width: 127px; }
  .name-box .caret { position: absolute; right: 8px; top: 13px; }
  .dots { width: 3px; height: 13px; align-self: center; background: repeating-linear-gradient(#b0b0b0 0 3px, transparent 3px 5px); }
  .formula-bar .dots { margin: 0 17px; }
  .entry { width: 137px; margin-right: 3px; }
  .entry button { display: grid; place-items: center; flex: 1; height: 28px; }
  .entry .fx { display: flex; align-items: center; justify-content: center; color: #777; font: 700 21px/24px "Liberation Serif", serif; }
  .entry .x { font-size: 16px; line-height: 30px; }
  .formula { flex: 1; }
  .formula-bar .formula input { padding-left: 19px; }
  .formula svg { margin-right: 4px; }

  /* sheet */
  .sheet { display: flex; flex: 1; min-height: 0; }
  .grid { flex: 1; min-width: 0; overflow: hidden; border-right: 1px solid #999; font: 18px/20px "Courier New", "Liberation Mono", monospace; color: #000; }
  table { width: 100%; table-layout: fixed; border-collapse: separate; border-spacing: 0; }
  .col-head { width: 41px; }
  .col-data { width: 96px; }
  th, td { height: 24px; padding: 3px 0 0; font-weight: 400; }
  thead th { border-bottom: 1px solid #999; background: linear-gradient(#d0d0d0, #999) right / 1px 100% no-repeat #e6e6e6; }
  thead th:last-child { background: #e6e6e6; }
  thead .corner { padding: 4px 4px 4px 21px; background: #e6e6e6; }
  tbody th { border-right: 1px solid #999; background: linear-gradient(90deg, #d0d0d0, #999) bottom / 100% 1px no-repeat #e6e6e6; }
  th.current { background-color: #d2d2d2; color: #217346; }
  td { position: relative; padding: 3px 4px 0; border-right: 1px solid #d4d4d4; border-bottom: 1px solid #d4d4d4; background: #fff; }
  td:last-child { border-right: 0; }
  .figure { text-align: right; }
  .selection { position: absolute; inset: -2px; z-index: 1; border: 2px solid #217346; }
  .selection::after { content: ""; position: absolute; right: -3px; bottom: -3px; width: 6px; height: 6px; border: solid #fff; border-width: 1px 0 0 1px; background: #217346; }

  .v-scroll { display: flex; flex-direction: column; width: 19px; margin: 2px 2px 0 3px; }
  .v-scroll button, .h-scroll button { display: grid; place-items: center; flex: none; width: 19px; height: 19px; border: 1px solid #c6c6c6; background: #fff; }
  .track { display: flex; flex: 1; background: #dadada; }
  .thumb { border: 1px solid #ababab; background: #fff; }
  .v-scroll .thumb { width: 19px; height: 96.5%; }

  .sheet-bar { display: flex; flex: none; height: 29px; margin-right: 24px; border-top: 1px solid #999; }
  .sheet-nav { display: flex; align-items: center; gap: 24px; width: 103px; padding-left: 28px; }
  .sheet-tab { height: 26px; margin-top: -1px; padding: 0 12px 2px; border: solid #999; border-width: 0 1px; border-bottom: 2px solid #217346; background: #fff; color: #217346; font-size: 16px; line-height: 20px; font-weight: 700; }
  .add { align-self: center; margin-left: 33px; }
  .sheet-bar .dots { margin-left: auto; margin-right: 15px; }
  .h-scroll { display: flex; align-items: center; width: 38.4%; }
  .h-scroll .track { height: 19px; }
  .h-scroll .thumb { width: 94.6%; }

  .status { display: flex; align-items: center; flex: none; height: 25px; padding-right: 7px; border-top: 1px solid #c6c6c6; background: #f1f1f1; font-size: 13px; }
  .ready { flex: 1; padding-left: 7px; }
  .view { display: grid; place-items: center; width: 41px; height: 24px; }
  .view.on { background: #c8c8c8; }
  .step { margin: 0 4px; }
  input[type="range"] { width: 124px; height: 16px; margin: 0 1px; appearance: none; background: linear-gradient(#aaa, #aaa) center / 100% 1px no-repeat; }
  input[type="range"]::-webkit-slider-thumb { appearance: none; width: 5px; height: 14px; background: #666; }
  .percent { width: 44px; text-align: right; }
</style>
